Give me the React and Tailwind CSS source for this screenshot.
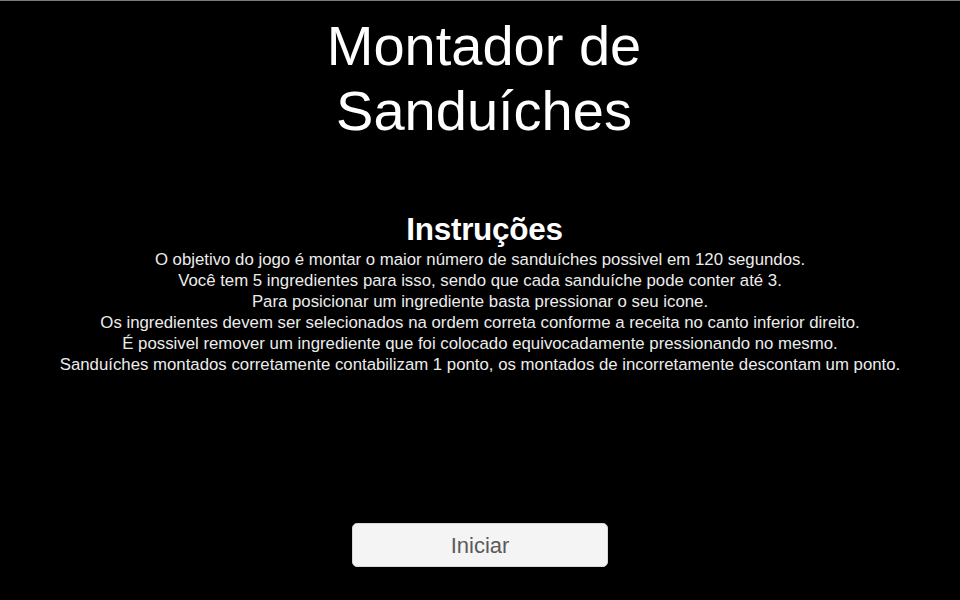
import React from 'react'

const lines = [
  'O objetivo do jogo é montar o maior número de sanduíches possivel em 120 segundos.',
  'Você tem 5 ingredientes para isso, sendo que cada sanduíche pode conter até 3.',
  'Para posicionar um ingrediente basta pressionar o seu icone.',
  'Os ingredientes devem ser selecionados na ordem correta conforme a receita no canto inferior direito.',
  'É possivel remover um ingrediente que foi colocado equivocadamente pressionando no mesmo.',
  'Sanduíches montados corretamente contabilizam 1 ponto, os montados de incorretamente descontam um ponto.',
]

export default function App() {
  return (
    <div className="w-[960px] h-[600px] bg-black flex flex-col items-center overflow-hidden font-['Liberation_Sans',Arial,sans-serif]">
      <div className="w-full h-px bg-[#7a7a7a] shrink-0" />
      <h1 className="mt-[12px] pl-[8px] text-white text-[56px] leading-[65px] text-center font-normal">
        Montador de
        <br />
        Sanduíches
      </h1>

      <h2 className="mt-[68px] pl-[9px] text-white text-[31.5px] leading-[36px] font-bold tracking-[-0.3px]">Instruções</h2>
      <div className="mt-[2px] text-[#ececec] text-[16.8px] leading-[21px] text-center">
        {lines.map((l) => (
          <p key={l} className="whitespace-nowrap">{l}</p>
        ))}
      </div>

      <button className="mt-[148px] w-[256px] h-[44px] rounded-[5px] bg-[#f4f4f4] border border-[#d8d8d8] text-[#5a5a5a] text-[22px] leading-none pt-[2px]">
        Iniciar
      </button>
    </div>
  )
}
